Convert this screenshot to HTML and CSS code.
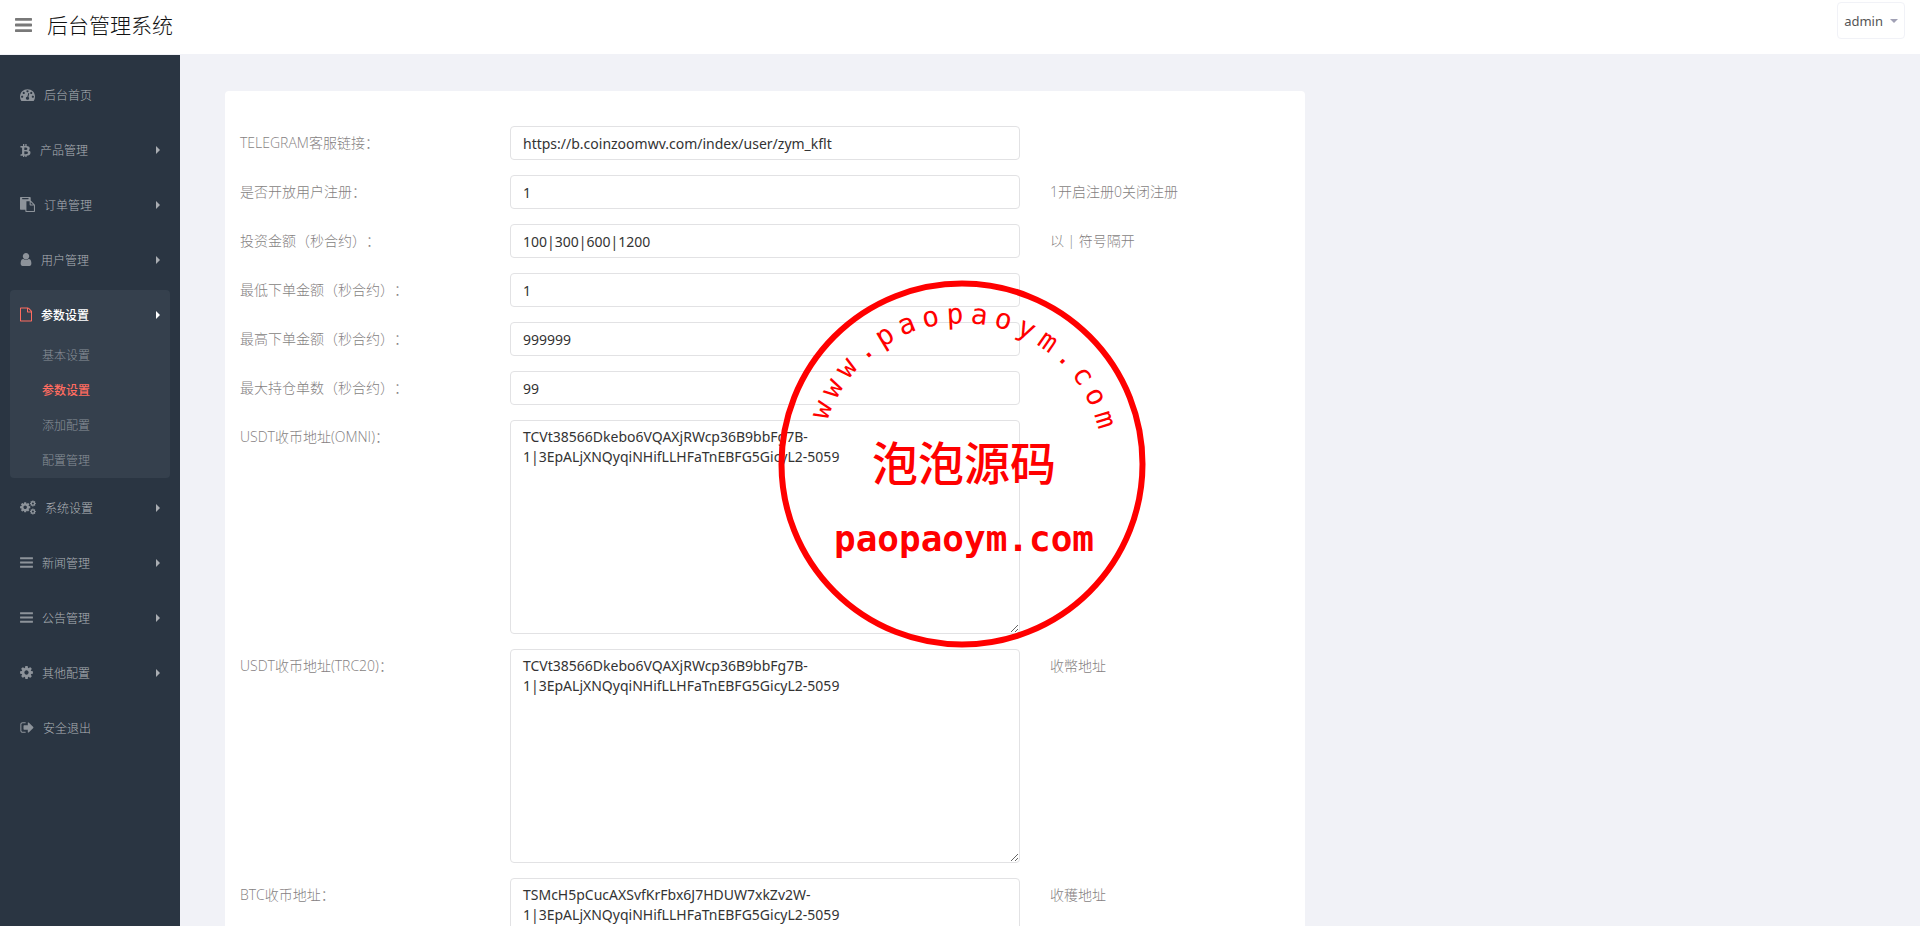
FILE: index.html
```html
<!DOCTYPE html>
<html lang="zh-CN">
<head>
  <meta charset="UTF-8">
  <meta name="viewport" content="width=device-width, initial-scale=1.0">
  <title>后台管理系统</title>
  <link rel="stylesheet" href="styles.css">
</head>
<body>
  <svg class="icon-defs" aria-hidden="true">
    <symbol id="i-bars" viewBox="128 0 1536 1792"><path d="M1664 1344v128q0 26-19 45t-45 19h-1408q-26 0-45-19t-19-45v-128q0-26 19-45t45-19h1408q26 0 45 19t19 45zm0-512v128q0 26-19 45t-45 19h-1408q-26 0-45-19t-19-45v-128q0-26 19-45t45-19h1408q26 0 45 19t19 45zm0-512v128q0 26-19 45t-45 19h-1408q-26 0-45-19t-19-45v-128q0-26 19-45t45-19h1408q26 0 45 19t19 45z"/></symbol>
    <symbol id="i-dashboard" viewBox="0 0 1792 1792"><path d="M384 1152q0-53-37.5-90.5t-90.5-37.5-90.5 37.5-37.5 90.5 37.5 90.5 90.5 37.5 90.5-37.5 37.5-90.5zm192-448q0-53-37.5-90.5t-90.5-37.5-90.5 37.5-37.5 90.5 37.5 90.5 90.5 37.5 90.5-37.5 37.5-90.5zm428 481l101-382q6-26-7.5-48.5t-38.5-29.5-48 6.5-30 39.5l-101 382q-60 5-107 43.5t-63 98.5q-20 77 20 146t117 89 146-20 89-117q16-60-6-117t-72-91zm660-33q0-53-37.5-90.5t-90.5-37.5-90.5 37.5-37.5 90.5 37.5 90.5 90.5 37.5 90.5-37.5 37.5-90.5zm-640-640q0-53-37.5-90.5t-90.5-37.5-90.5 37.5-37.5 90.5 37.5 90.5 90.5 37.5 90.5-37.5 37.5-90.5zm448 192q0-53-37.5-90.5t-90.5-37.5-90.5 37.5-37.5 90.5 37.5 90.5 90.5 37.5 90.5-37.5 37.5-90.5zm320 448q0 261-141 483-19 29-54 29h-1402q-35 0-54-29-141-221-141-483 0-182 71-348t191-286 286-191 348-71 348 71 286 191 191 286 71 348z"/></symbol>
    <symbol id="i-btc" viewBox="256 0 1280 1792"><path d="M1399 744q18 182-131 258 117 28 175 103t45 214q-7 71-32.5 125t-64.5 89-97 58.5-121.5 34.5-145.5 15v255h-154v-251q-80 0-122-1v252h-154v-255q-18 0-54-.5t-55-.5h-200l31-183h111q50 0 58-51v-402h16q-6-1-16-1v-287q-13-68-89-68h-111v-164l212 1q64 0 97-1v-252h154v247q82-2 122-2v-245h154v252q79 7 140 22.5t113 45 82.5 78 36.5 114.5zm-215 545q0-36-15-64t-37-46-57.5-30.5-65.5-18.5-74-9-69-3-64.5 1-47.5 1v338q8 0 37 .5t48 .5 53-1.5 58.5-4 57-8.5 55.5-14 47.5-21 39.5-30 24.5-40 9.5-51zm-71-476q0-33-12.5-58.5t-30.5-42-48-28-55-16.5-61.5-8-58-2.5-54 1-39.5.5v307q5 0 34.5.5t46.5 0 50-2 55-5.5 51.5-11 48.5-18.5 37-27 27-38.5 9-51z"/></symbol>
    <symbol id="i-paste" viewBox="0 0 1792 1792"><path d="M768 1664h896v-640h-416q-40 0-68-28t-28-68v-416h-384v1152zm256-1440v-64q0-13-9.5-22.5t-22.5-9.5h-704q-13 0-22.5 9.5t-9.5 22.5v64q0 13 9.5 22.5t22.5 9.5h704q13 0 22.5-9.5t9.5-22.5zm256 672h299l-299-299v299zm512 128v672q0 40-28 68t-68 28h-960q-40 0-68-28t-28-68v-160h-544q-40 0-68-28t-28-68v-1344q0-40 28-68t68-28h1088q40 0 68 28t28 68v328q21 13 36 28l408 408q28 28 48 76t20 88z"/></symbol>
    <symbol id="i-user" viewBox="256 0 1280 1792"><path d="M1536 1399q0 109-62.5 187t-150.5 78h-854q-88 0-150.5-78t-62.5-187q0-85 8.5-160.5t31.5-152 58.5-131 94-89 134.5-34.5q131 128 313 128t313-128q76 0 134.5 34.5t94 89 58.5 131 31.5 152 8.5 160.5zm-256-887q0 159-112.5 271.5t-271.5 112.5-271.5-112.5-112.5-271.5 112.5-271.5 271.5-112.5 271.5 112.5 112.5 271.5z"/></symbol>
    <symbol id="i-file" viewBox="128 0 1536 1792"><path d="M1596 380q28 28 48 76t20 88v1152q0 40-28 68t-68 28h-1344q-40 0-68-28t-28-68v-1600q0-40 28-68t68-28h896q40 0 88 20t76 48zm-444-244v376h376q-10-29-22-41l-313-313q-12-12-41-22zm384 1528v-1024h-416q-40 0-68-28t-28-68v-416h-768v1536h1280z"/></symbol>
    <symbol id="i-cog" viewBox="128 0 1536 1792"><path id="cog-path" d="M1152 896q0-106-75-181t-181-75-181 75-75 181 75 181 181 75 181-75 75-181zm512-109v222q0 12-8 23t-20 13l-185 28q-19 54-39 91 35 50 107 138 10 12 10 25t-9 23q-27 37-99 108t-94 71q-12 0-26-9l-138-108q-44 23-91 38-16 136-29 186-7 28-36 28h-222q-14 0-24.5-8.5t-11.5-21.5l-28-184q-49-16-90-37l-141 107q-10 9-25 9-14 0-25-11-126-114-165-168-7-10-7-23 0-12 8-23 15-21 51-66.5t54-70.5q-27-50-41-99l-183-27q-13-2-21-12.5t-8-23.5v-222q0-12 8-23t19-13l186-28q14-46 39-92-40-57-107-138-10-12-10-24 0-10 9-23 26-36 98.5-107.5t94.5-71.5q13 0 26 10l138 107q44-23 91-38 16-136 29-186 7-28 36-28h222q14 0 24.5 8.5t11.5 21.5l28 184q49 16 90 37l142-107q9-9 24-9 13 0 25 10 129 119 165 170 7 8 7 22 0 12-8 23-15 21-51 66.5t-54 70.5q26 50 41 98l183 28q13 2 21 12.5t8 23.5z"/></symbol>
    <symbol id="i-cogs" viewBox="0 0 1920 1792">
      <use href="#cog-path" transform="translate(-96 149) scale(.8)"/>
      <use href="#cog-path" transform="translate(1136 0) scale(.46)"/>
      <use href="#cog-path" transform="translate(1136 970) scale(.46)"/>
    </symbol>
    <symbol id="i-signout" viewBox="64 0 1600 1792"><path d="M704 1440q0 4 1 20t.5 26.5-3 23.5-10 19.5-20.5 6.5h-320q-119 0-203.5-84.5t-84.5-203.5v-704q0-119 84.5-203.5t203.5-84.5h320q13 0 22.5 9.5t9.5 22.5q0 4 1 20t.5 26.5-3 23.5-10 19.5-20.5 6.5h-320q-66 0-113 47t-47 113v704q0 66 47 113t113 47h312l11.5 1 11.5 3 8 5.5 7 9 2 13.5zm928-544q0 26-19 45l-544 544q-19 19-45 19t-45-19-19-45v-288h-448q-26 0-45-19t-19-45v-384q0-26 19-45t45-19h448v-288q0-26 19-45t45-19 45 19l544 544q19 19 19 45z"/></symbol>
  </svg>

  <header class="header">
    <button class="toggle" type="button" aria-label="菜单"><svg><use href="#i-bars"/></svg></button>
    <a class="logo" href="#">后台管理系统</a>
    <button class="user-btn" type="button">admin <span class="caret"></span></button>
  </header>

  <div class="layout">
    <nav class="sidebar">
      <ul class="menu">
        <li><a href="#"><svg class="icon w15"><use href="#i-dashboard"/></svg>后台首页</a></li>
        <li><a class="has-sub" href="#"><svg class="icon w11"><use href="#i-btc"/></svg>产品管理</a></li>
        <li><a class="has-sub" href="#"><svg class="icon w15"><use href="#i-paste"/></svg>订单管理</a></li>
        <li><a class="has-sub" href="#"><svg class="icon w12"><use href="#i-user"/></svg>用户管理</a></li>
        <li class="active">
          <a class="has-sub" href="#"><svg class="icon w12"><use href="#i-file"/></svg>参数设置</a>
          <ul class="sub">
            <li><a href="#">基本设置</a></li>
            <li><a class="current" href="#">参数设置</a></li>
            <li><a href="#">添加配置</a></li>
            <li><a href="#">配置管理</a></li>
          </ul>
        </li>
        <li><a class="has-sub" href="#"><svg class="icon w16"><use href="#i-cogs"/></svg>系统设置</a></li>
        <li><a class="has-sub" href="#"><svg class="icon w13"><use href="#i-bars"/></svg>新闻管理</a></li>
        <li><a class="has-sub" href="#"><svg class="icon w13"><use href="#i-bars"/></svg>公告管理</a></li>
        <li><a class="has-sub" href="#"><svg class="icon w13"><use href="#i-cog"/></svg>其他配置</a></li>
        <li><a href="#"><svg class="icon w14"><use href="#i-signout"/></svg>安全退出</a></li>
      </ul>
    </nav>

    <main class="content">
      <form class="panel">
        <div class="form-group">
          <label for="telegram">TELEGRAM客服链接：</label>
          <div class="field"><input type="text" id="telegram" value="https://b.coinzoomwv.com/index/user/zym_kflt"></div>
        </div>
        <div class="form-group">
          <label for="reg">是否开放用户注册：</label>
          <div class="field"><input type="text" id="reg" value="1"></div>
          <span class="hint">1开启注册0关闭注册</span>
        </div>
        <div class="form-group">
          <label for="amounts">投资金额（秒合约）：</label>
          <div class="field"><input type="text" id="amounts" value="100|300|600|1200"></div>
          <span class="hint">以 | 符号隔开</span>
        </div>
        <div class="form-group">
          <label for="min">最低下单金额（秒合约）：</label>
          <div class="field"><input type="text" id="min" value="1"></div>
        </div>
        <div class="form-group">
          <label for="max">最高下单金额（秒合约）：</label>
          <div class="field"><input type="text" id="max" value="999999"></div>
        </div>
        <div class="form-group">
          <label for="hold">最大持仓单数（秒合约）：</label>
          <div class="field"><input type="text" id="hold" value="99"></div>
        </div>
        <div class="form-group">
          <label for="omni">USDT收币地址(OMNI)：</label>
          <div class="field"><textarea id="omni" rows="10" spellcheck="false">TCVt38566Dkebo6VQAXjRWcp36B9bbFg7B-1|3EpALjXNQyqiNHifLLHFaTnEBFG5GicyL2-5059</textarea></div>
        </div>
        <div class="form-group">
          <label for="trc">USDT收币地址(TRC20)：</label>
          <div class="field"><textarea id="trc" rows="10" spellcheck="false">TCVt38566Dkebo6VQAXjRWcp36B9bbFg7B-1|3EpALjXNQyqiNHifLLHFaTnEBFG5GicyL2-5059</textarea></div>
          <span class="hint">收幣地址</span>
        </div>
        <div class="form-group">
          <label for="btc">BTC收币地址：</label>
          <div class="field"><textarea id="btc" rows="10" spellcheck="false">TSMcH5pCucAXSvfKrFbx6J7HDUW7xkZv2W-1|3EpALjXNQyqiNHifLLHFaTnEBFG5GicyL2-5059</textarea></div>
          <span class="hint">收穫地址</span>
        </div>
      </form>
    </main>

    <!-- round stamp over the form -->
    <svg class="stamp" viewBox="0 0 368 368">
      <circle cx="184" cy="184" r="180.5"/>
      <text class="stamp-arc" x="49 58 70 86 104 124 146 169 192 215 237 258 277 293 306 316" y="141 120 100 82 68 56 48 44 43 46 53 64 77 94 113 134" rotate="-69 -60 -50 -41 -31 -22 -12 -3 7 16 26 35 44 54 63 73">www.paopaoym.com</text>
      <text class="stamp-name" x="186" y="200">泡泡源码</text>
      <text class="stamp-site" x="186" y="271">paopaoym.com</text>
    </svg>
  </div>
</body>
</html>
```
FILE: styles.css
```css
* {
  box-sizing: border-box;
}
body {
  margin: 0;
  height: 100vh;
  display: flex;
  flex-direction: column;
  overflow: hidden;
  background: #f1f2f7;
  color: #797979;
  font-family: "Open Sans", "Noto Sans CJK SC", sans-serif;
  font-size: 14px;
  line-height: 20px;
}
a {
  text-decoration: none;
}
ul {
  list-style: none;
  margin: 0;
  padding: 0;
}
.icon-defs {
  display: none;
}

/* header */
.header {
  display: flex;
  align-items: flex-start;
  flex: none;
  height: 55px;
  padding: 0 15px;
  background: #fff;
  border-bottom: 1px solid #f1f2f7;
}
.toggle {
  margin: 0;
  padding: 15px 0 0;
  border: 0;
  background: none;
  color: #797979;
  cursor: pointer;
}
.toggle svg {
  display: block;
  width: 17px;
  height: 20px;
  fill: currentColor;
}
.logo {
  margin: 10px 0 0 15px;
  color: #111;
  font-size: 21px;
  font-weight: 300;
  line-height: 30px;
}
.user-btn {
  display: flex;
  align-items: center;
  gap: 7px;
  height: 37px;
  margin: 2px 0 0 auto;
  padding: 0 6px;
  border: 1px solid #f1f2f7;
  border-radius: 4px;
  background: #fff;
  color: #555;
  font-family: "Noto Sans", sans-serif;
  font-size: 13px;
  cursor: pointer;
}
.caret {
  border: 4px solid transparent;
  border-top-color: #a1a1b5;
  border-bottom: 0;
}

/* sidebar */
.layout {
  position: relative;
  display: flex;
  flex: 1;
  min-height: 0;
}
.sidebar {
  flex: none;
  width: 180px;
  padding: 15px 10px;
  background: #2a3542;
}
.menu > li {
  margin-bottom: 5px;
  border-radius: 4px;
}
.menu > li > a {
  display: flex;
  align-items: center;
  gap: 9px;
  height: 50px;
  padding: 2px 10px 0;
  color: #aeb2b7;
  font-size: 12px;
  font-weight: 300;
}
.icon {
  height: 15px;
  margin-bottom: 3px;
  fill: #8d939a;
}
.w11 { width: 11px; }
.w12 { width: 12px; }
.w13 { width: 13px; }
.w14 { width: 14px; }
.w15 { width: 15px; }
.w16 { width: 16px; }
.has-sub::after {
  content: "";
  margin: 0 0 2px auto;
  border: 4px solid transparent;
  border-left-color: #a9adb2;
  border-right: 0;
}
.menu > .active {
  background: #35404d;
}
.menu > .active > a {
  color: #fff;
  font-weight: 500;
}
.active .icon {
  fill: #ff6c60;
}
.active .has-sub::after {
  border-left-color: #fff;
}
.sub {
  margin-top: -2px;
}
.sub a {
  display: block;
  padding-left: 32px;
  color: #8b929a;
  font-size: 12px;
  font-weight: 300;
  line-height: 35px;
}
.sub .current {
  color: #ff6c60;
  font-weight: 500;
}

/* form */
.content {
  flex: 1;
  min-width: 0;
  padding: 36px 45px;
  overflow-y: auto;
  scrollbar-width: none;
}
.panel {
  width: calc((100% - 30px) * 2 / 3);
  padding: 35px 0 20px;
  background: #fff;
  border-radius: 4px;
}
.form-group {
  display: grid;
  grid-template-columns: 1fr 2fr 1fr;
  margin-bottom: 15px;
}
.form-group label,
.hint {
  padding: 7px 15px 0;
  color: #857f82;
  font-weight: 300;
  text-spacing-trim: space-all;
}
.field {
  padding: 0 15px;
}
.field input,
.field textarea {
  display: block;
  width: 100%;
  margin: 0;
  padding: 6px 12px;
  border: 1px solid #e2e2e4;
  border-radius: 4px;
  background: #fff;
  color: #333;
  font-family: "Noto Sans", "Noto Sans CJK SC", sans-serif;
  font-size: 14px;
  line-height: 20px;
}
.field input {
  height: 34px;
}
.field textarea {
  resize: vertical;
}

/* stamp */
.stamp {
  position: absolute;
  left: 778px;
  top: 225px;
  width: 368px;
  height: 368px;
  pointer-events: none;
}
.stamp circle {
  fill: none;
  stroke: #f00;
  stroke-width: 6px;
}
.stamp text {
  fill: #f00;
}
.stamp-arc {
  font-family: "DejaVu Sans Mono", monospace;
  font-size: 28px;
}
.stamp-name {
  font-family: "Noto Sans CJK SC", sans-serif;
  font-size: 46px;
  font-weight: 500;
  text-anchor: middle;
}
.stamp-site {
  font-family: "DejaVu Sans Mono", monospace;
  font-size: 36px;
  font-weight: 700;
  text-anchor: middle;
}
```
